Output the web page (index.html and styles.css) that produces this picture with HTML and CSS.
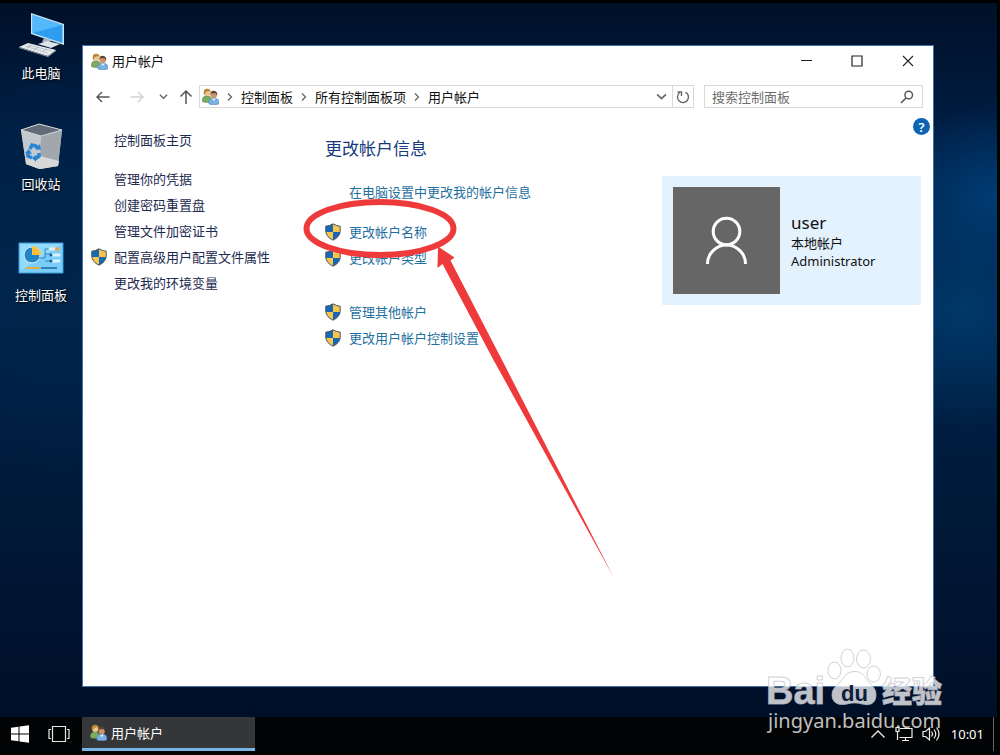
FILE: index.html
```html
<!DOCTYPE html>
<html lang="zh-CN">
<head>
    <meta charset="UTF-8">
    <meta name="viewport" content="width=device-width, initial-scale=1.0">
    <title>用户帐户</title>
    <link rel="stylesheet" href="styles.css">
</head>
<body>
    <!-- 公用图标 -->
    <svg class="symbols" aria-hidden="true">
        <symbol id="users" viewBox="0 0 16 16">
            <path d="M.5 13V10.500Q.7 8 3 7.500H6.500Q8.500 8 8.500 10.500V13Q4.500 14.300.5 13Z" fill="#7cab62" stroke="#59854a" stroke-width=".5"/>
            <circle cx="5" cy="4.500" r="3" fill="#ecc58d"/>
            <path d="M1.700 5.500Q1 1.300 4.200.7 7.800.2 8.200 3.500L6.800 3 4.500 3.200 3 4.800 2.800 7Z" fill="#b8893b"/>
            <path d="M6.500 15V12.500Q7 10 9.500 9.700H12.500Q15.500 10 15.800 12.500V15Q11 16.600 6.500 15Z" fill="#7bb1e3" stroke="#4c85bd" stroke-width=".5"/>
            <path d="m9.400 10 1.800 2.200L13 9.800Z" fill="#eef5fb"/>
            <circle cx="11" cy="6.500" r="3" fill="#cd936a"/>
            <path d="M8 6.500Q7.600 2.600 11 2.500 15 2.700 14.200 7.500L13 5 9 5Z" fill="#594333"/>
        </symbol>
        <symbol id="shield" viewBox="0 0 16 18">
            <path d="M8 .8Q4.500 3 .8 3.200V8.500Q1.300 14 8 17.200 14.700 14 15.200 8.500V3.200Q11.500 3 8 .8Z" fill="#f8c64d"/>
            <path d="M8 .8Q4.500 3 .8 3.200V9H8ZM8 9H15.200Q14.500 14 8 17.200Z" fill="#1769b5"/>
            <path d="M8 .8Q4.500 3 .8 3.200V8.500Q1.300 14 8 17.200 14.700 14 15.200 8.500V3.200Q11.500 3 8 .8Z" fill="none" stroke="#4b5560"/>
        </symbol>
        <symbol id="chevron" viewBox="0 0 10 10">
            <path d="m3 1.500 3.500 3.500L3 8.500" fill="none" stroke="#666" stroke-width="1.300"/>
        </symbol>
        <symbol id="chevron-down" viewBox="0 0 10 10">
            <path d="m1 3 4 4 4-4" fill="none" stroke="#666" stroke-width="1.500"/>
        </symbol>
    </svg>

    <div class="desktop">
        <nav class="desktop-icons" aria-label="桌面">
            <a class="shortcut" href="#">
                <svg width="48" height="48" viewBox="0 0 48 48">
                    <path d="m14 2 33 11v21L14 23Z" fill="#c9e4f5"/>
                    <path d="m15.500 4 30 10v18L15.500 22Z" fill="#2e9df0"/>
                    <path d="m15.500 4 30 10L15.500 22Z" fill="#55b8fa"/>
                    <path d="m27 27 7 2-1 3-8-1Z" fill="#a3b2bd"/>
                    <path d="m21 33 9-3 13 3-9 4Z" fill="#dde4e8"/>
                    <path d="m2 36 9-4 28 7-8 6Z" fill="#e7ebee"/>
                    <path d="m2 36 29 9 8-6v1l-8 6L2 37Z" fill="#8e9ba5"/>
                    <path d="m8 35 23 7M11 34l24 6M10 37l5-3M17 39l5-3M25 41l5-3" stroke="#a8b2ba" stroke-width=".7"/>
                </svg>
                <span>此电脑</span>
            </a>
            <a class="shortcut" href="#">
                <svg width="48" height="48" viewBox="0 0 48 48">
                    <path d="m4 8 18-6 23 6-4 36-19 3L9 42Z" fill="#aeb4ba"/>
                    <path d="m4 8 20 6-1 33L9 42Z" fill="#c4c9cd"/>
                    <path d="m24 14 21-6-4 36-18 3Z" fill="#a1a7ad"/>
                    <path d="m9 38 14-4 19 5-1 5-18 3L9 42Z" fill="#d5d7d8"/>
                    <path d="m4 8 18-6 23 6-21 6Z" fill="#626b76" stroke="#d4d8dc"/>
                    <path d="m13 27 2-4 4 1 2 3M22 31v3l-4 3M15 36l-4-2v-3" fill="none" stroke="#2786d4" stroke-width="3.500"/>
                    <path d="m18 27 6 1-1-6ZM19 33v7l-4-4ZM8 31l4-4 3 5Z" fill="#2786d4"/>
                </svg>
                <span>回收站</span>
            </a>
            <a class="shortcut" href="#">
                <svg width="48" height="48" viewBox="0 0 48 48">
                    <path d="M2 10h44v30H2Z" fill="#79cdf8" stroke="#3b9ddd"/>
                    <path d="M3 11h42L3 38Z" fill="#94dafb"/>
                    <circle cx="15" cy="22" r="8" fill="#2383c7" stroke="#d4edf9"/>
                    <path d="M15 22v-9a9 9 0 0 1 9 9Z" fill="#ffc13b"/>
                    <path d="M21 25h7v-9h4M28 21h6M28 28h6" fill="none" stroke="#2e87bc"/>
                    <path d="M33 16h7M35 22h7M35 28h7" stroke="#d9f2fc" stroke-width="3" stroke-linecap="round"/>
                    <path d="M9 35h14" stroke="#e2ae46" stroke-width="2"/>
                    <path d="M24 35h16" stroke="#2d81b8" stroke-width="2"/>
                    <circle cx="40" cy="16" r="2" fill="#f5a23a"/>
                    <circle cx="34" cy="22" r="1.500" fill="#165f9b"/>
                    <circle cx="34" cy="28" r="1.500" fill="#165f9b"/>
                </svg>
                <span>控制面板</span>
            </a>
        </nav>

        <div class="window">
            <header class="title-bar">
                <svg width="17" height="17"><use href="#users"/></svg>
                <h1>用户帐户</h1>
                <button type="button" aria-label="最小化">
                    <svg width="12" height="12" viewBox="0 0 12 12"><path d="M1 5.500h11" stroke="#222"/></svg>
                </button>
                <button type="button" aria-label="最大化">
                    <svg width="12" height="12" viewBox="0 0 12 12"><path d="M1 1h10v10H1Z" fill="none" stroke="#222" stroke-width="1.200"/></svg>
                </button>
                <button type="button" aria-label="关闭">
                    <svg width="12" height="12" viewBox="0 0 12 12"><path d="m1 1 10 10M11 1 1 11" stroke="#222" stroke-width="1.100"/></svg>
                </button>
            </header>

            <div class="nav-bar">
                <div class="nav-buttons">
                    <button type="button" aria-label="后退">
                        <svg width="14" height="14" viewBox="0 0 14 14"><path d="M13.500 7H1M6 2 1 7l5 5" fill="none" stroke="#555" stroke-width="1.400"/></svg>
                    </button>
                    <button type="button" aria-label="前进" disabled>
                        <svg width="14" height="14" viewBox="0 0 14 14"><path d="M.5 7H13M8 2l5 5-5 5" fill="none" stroke="#d2d2d2" stroke-width="1.400"/></svg>
                    </button>
                    <button type="button" aria-label="最近浏览的位置">
                        <svg width="9" height="9"><use href="#chevron-down"/></svg>
                    </button>
                    <button type="button" aria-label="上移">
                        <svg width="14" height="14" viewBox="0 0 14 14"><path d="M7 14V1M1.500 6.500 7 1l5.500 5.500" fill="none" stroke="#555" stroke-width="1.500"/></svg>
                    </button>
                </div>
                <div class="address">
                    <svg width="17" height="17"><use href="#users"/></svg>
                    <svg class="sep" width="10" height="10"><use href="#chevron"/></svg>
                    <a href="#">控制面板</a>
                    <svg class="sep" width="10" height="10"><use href="#chevron"/></svg>
                    <a href="#">所有控制面板项</a>
                    <svg class="sep" width="10" height="10"><use href="#chevron"/></svg>
                    <a href="#">用户帐户</a>
                    <button class="history" type="button" aria-label="历史记录">
                        <svg width="11" height="11"><use href="#chevron-down"/></svg>
                    </button>
                    <button class="refresh" type="button" aria-label="刷新">
                        <svg width="14" height="14" viewBox="0 0 14 14"><path d="M9.500 2.200A5.500 5.500 0 1 1 3.500 2.800M1.500 2h4v4" fill="none" stroke="#666" stroke-width="1.400"/></svg>
                    </button>
                </div>
                <form class="search">
                    <input type="text" placeholder="搜索控制面板" aria-label="搜索控制面板">
                    <button type="button" aria-label="搜索">
                        <svg width="14" height="14" viewBox="0 0 14 14"><circle cx="8.700" cy="5" r="3.800" fill="none" stroke="#555" stroke-width="1.400"/><path d="M6 8 1 13" stroke="#555" stroke-width="1.600"/></svg>
                    </button>
                </form>
            </div>

            <div class="content">
                <aside class="sidebar">
                    <a class="home" href="#">控制面板主页</a>
                    <a href="#">管理你的凭据</a>
                    <a href="#">创建密码重置盘</a>
                    <a href="#">管理文件加密证书</a>
                    <a class="admin" href="#"><svg width="16" height="18"><use href="#shield"/></svg>配置高级用户配置文件属性</a>
                    <a href="#">更改我的环境变量</a>
                </aside>

                <main class="account">
                    <h2>更改帐户信息</h2>
                    <div class="tasks">
                        <a class="plain" href="#">在电脑设置中更改我的帐户信息</a>
                    </div>
                    <div class="tasks">
                        <a href="#"><svg width="16" height="18"><use href="#shield"/></svg>更改帐户名称</a>
                        <a href="#"><svg width="16" height="18"><use href="#shield"/></svg>更改帐户类型</a>
                    </div>
                    <div class="tasks others">
                        <a href="#"><svg width="16" height="18"><use href="#shield"/></svg>管理其他帐户</a>
                        <a href="#"><svg width="16" height="18"><use href="#shield"/></svg>更改用户帐户控制设置</a>
                    </div>
                </main>

                <div class="profile">
                    <button class="help" type="button" aria-label="帮助">?</button>
                    <section class="card">
                        <svg class="avatar" width="107" height="107" viewBox="0 0 107 107">
                            <g fill="none" stroke="#fff" stroke-width="3">
                                <circle cx="53.500" cy="44.500" r="13.300"/>
                                <path d="M34.500 77a19 19 0 0 1 38 0"/>
                            </g>
                        </svg>
                        <div class="card-text">
                            <strong>user</strong>
                            <span>本地帐户</span>
                            <span>Administrator</span>
                        </div>
                    </section>
                </div>
            </div>

            <!-- 红圈和箭头 -->
            <svg class="marker" width="312" height="380" viewBox="303 198 312 380" aria-hidden="true">
                <ellipse cx="380" cy="228.500" rx="73.500" ry="26.500" fill="none" stroke="#ee3a3a" stroke-width="6"/>
                <path d="M438 246.500 454.500 257.500 450.500 260.500 502 360 613.500 577 493.500 360 442.500 264 437.500 268Z" fill="#ee3a3a"/>
            </svg>
        </div>
    </div>

    <footer class="taskbar">
        <button class="start" type="button" aria-label="开始">
            <svg width="18" height="18" viewBox="0 0 18 18"><path d="m0 2.800 7.500-1V8.500H0ZM8.500 1.600 18 .2v8.300H8.500ZM0 9.500h7.500v6.700L0 15.200ZM8.500 9.500H18v8.300l-9.500-1.400Z" fill="#fff"/></svg>
        </button>
        <button class="task-view" type="button" aria-label="任务视图">
            <svg width="22" height="18" viewBox="0 0 22 18"><path d="M4.500 1.500h13v15h-13ZM3 4.500H1v9h2M19 4.500h2v9h-2" fill="none" stroke="#e8e8e8" stroke-width="1.200"/></svg>
        </button>
        <button class="app" type="button">
            <svg width="17" height="17"><use href="#users"/></svg>
            用户帐户
        </button>
        <div class="tray">
            <svg width="16" height="10" viewBox="0 0 16 10"><path d="m1.500 8.500 6.500-6.500 6.500 6.500" fill="none" stroke="#eee" stroke-width="1.300"/></svg>
            <svg width="18" height="16" viewBox="0 0 18 16"><path d="M5 2.500h12v9H4.500M7 14.500h7M10.500 12v2M1 1.500h3v4H1ZM2.500 5.500V14" fill="none" stroke="#eee" stroke-width="1.200"/></svg>
            <svg width="18" height="16" viewBox="0 0 18 16"><path d="M1 5.500h2.500L7.500 2v12L3.500 10.500H1ZM9.500 5.500q2 2.500 0 5M12 3.500q3.500 4.500 0 9M14.500 1.500q5 6.500 0 13" fill="none" stroke="#eee" stroke-width="1.200"/></svg>
            <time>10:01</time>
        </div>
    </footer>

    <svg class="watermark" width="182" height="92" viewBox="765 645 182 92">
        <g class="mark">
            <text class="bai" x="766" y="704">Bai</text>
            <ellipse cx="834.500" cy="670.500" rx="6.500" ry="8.500"/>
            <ellipse cx="847.500" cy="658" rx="6.500" ry="9"/>
            <ellipse cx="863.500" cy="659" rx="7" ry="9"/>
            <ellipse cx="873.700" cy="674" rx="6.700" ry="8"/>
            <path d="M855 671.500C862 671.500 865 677 868 681 872 686 876 688 876 695 876 704 869 706 862 704 857 702.500 852 702.500 847 704 839 706 832 703 832 695 832 688 837 686 841 681 845 676 847 671.500 855 671.500Z"/>
            <text class="jingyan" x="882" y="702">经验</text>
            <text class="url" x="768" y="728">jingyan.baidu.com</text>
        </g>
        <text class="du" x="841" y="701">du</text>
    </svg>
</body>
</html>
```
FILE: styles.css
```css
* {
    box-sizing: border-box;
}
body {
    margin: 0;
    min-height: 100vh;
    display: flex;
    flex-direction: column;
    position: relative;
    background-color: #000;
    font-family: "Noto Sans", "Noto Sans CJK SC", sans-serif;
    font-size: 13px;
    line-height: 18px;
    color: #111;
}
a {
    color: inherit;
    text-decoration: none;
}
button, input {
    border: 0;
    padding: 0;
    background: none;
    font: inherit;
    color: inherit;
}
button {
    display: flex;
    align-items: center;
    justify-content: center;
}
svg {
    display: block;
    flex-shrink: 0;
}
.symbols {
    position: absolute;
    width: 0;
    height: 0;
}

/* 桌面 */
.desktop {
    flex: 1;
    display: flex;
    padding: 42px 63px 30px 0;
    border-top: 3px solid #000;
    border-right: 3px solid #000;
    background:
        radial-gradient(ellipse 130px 90px at 100% 27%, #003c74 0%, rgba(0, 60, 116, 0) 100%),
        radial-gradient(ellipse 130px 120px at 97% 43%, #003868 0%, rgba(0, 56, 104, 0) 100%),
        radial-gradient(ellipse 150px 230px at 6% 36%, #002449 0%, rgba(0, 36, 73, 0) 100%),
        linear-gradient(#001029 0%, #001d42 18%, #002650 40%, #001b3c 65%, #000f28 100%);
}
.desktop-icons {
    width: 82px;
    margin-top: -34px;
    display: flex;
    flex-direction: column;
    gap: 40px;
}
.shortcut {
    display: flex;
    flex-direction: column;
    align-items: center;
    gap: 5px;
    color: #fff;
    text-shadow: 1px 1px 2px #000;
}

/* 窗口 */
.window {
    flex: 1;
    position: relative;
    background-color: #fff;
    border: 1px solid #3d73a8;
}
.title-bar {
    display: flex;
    align-items: center;
    height: 30px;
    padding-left: 8px;
}
.title-bar h1 {
    flex: 1;
    margin: 0 0 0 4px;
    font-size: 13px;
    font-weight: 400;
}
.title-bar button {
    width: 51px;
    height: 30px;
}
.nav-bar {
    display: flex;
    height: 23px;
    margin: 9px 10px 0 13px;
}
.nav-buttons {
    display: flex;
    align-items: center;
    gap: 15px;
    width: 103px;
}
.nav-buttons button:nth-child(2) {
    margin-left: 5px;
}
.nav-buttons button:last-child {
    margin-left: -4px;
}
.address {
    flex: 1;
    display: flex;
    align-items: center;
    padding-left: 2px;
    border: 1px solid #d9d9d9;
}
.sep {
    margin: 0 6px;
}
.address .history {
    width: 22px;
    height: 21px;
    margin-left: auto;
}
.address .refresh {
    width: 21px;
    height: 21px;
    border-left: 1px solid #d9d9d9;
}
.search {
    display: flex;
    width: 219px;
    margin-left: 10px;
    border: 1px solid #d9d9d9;
}
.search input {
    flex: 1;
    min-width: 0;
    padding-left: 7px;
}
.search input::placeholder {
    color: #6d6d6d;
}
.search button {
    width: 30px;
}

.content {
    display: grid;
    grid-template-columns: 242px 1fr 271px;
}
.sidebar {
    display: flex;
    flex-direction: column;
    padding: 19px 0 0 31px;
    line-height: 26px;
    color: #1e2b50;
}
.sidebar .home {
    margin-bottom: 13px;
}
.sidebar .admin {
    display: flex;
    align-items: center;
    gap: 7px;
    margin-left: -23px;
}
.account {
    padding-top: 28px;
    line-height: 26px;
}
.account h2 {
    margin: 0 0 17px;
    font-size: 17px;
    font-weight: 400;
    color: #16397e;
}
.tasks {
    margin-bottom: 14px;
    color: #1f6f9f;
}
.tasks a {
    display: flex;
    align-items: center;
    gap: 8px;
}
.tasks .plain {
    padding-left: 24px;
}
.others {
    margin-top: 28px;
}
.profile {
    display: flex;
    flex-direction: column;
    padding-top: 10px;
}
.help {
    align-self: flex-end;
    width: 17px;
    height: 17px;
    margin-right: 3px;
    border-radius: 50%;
    background-color: #0f63b5;
    color: #fff;
    font-weight: 600;
}
.card {
    display: flex;
    align-items: center;
    gap: 11px;
    margin: 41px 12px 0 0;
    padding: 11px;
    background-color: #e3f2fd;
}
.avatar {
    background-color: #666;
}
.card-text {
    display: flex;
    flex-direction: column;
}
.card-text strong {
    font-size: 17px;
    font-weight: 400;
    line-height: 22px;
}
.marker {
    position: absolute;
    left: 220px;
    top: 152px;
    pointer-events: none;
}

/* 任务栏 */
.taskbar {
    display: flex;
    height: 38px;
    padding-bottom: 4px;
    background-color: #020305;
    color: #fff;
}
.start {
    width: 40px;
}
.task-view {
    width: 38px;
}
.app {
    width: 173px;
    margin-left: 4px;
    padding-left: 8px;
    justify-content: flex-start;
    gap: 4px;
    background-color: #343638;
    border-bottom: 3px solid #78b5e6;
}
.tray {
    display: flex;
    align-items: center;
    gap: 9px;
    margin: 0 6px 0 auto;
    padding-right: 9px;
    border-right: 1px solid #666;
}
.tray time {
    margin-left: 2px;
}

/* 水印 */
.watermark {
    position: absolute;
    right: 53px;
    bottom: 18px;
    pointer-events: none;
}
.mark {
    fill: rgba(255, 255, 255, .75);
    stroke: rgba(190, 190, 200, .7);
    stroke-width: 1px;
}
.bai {
    font: bold 38px "Liberation Sans", sans-serif;
}
.du {
    font: bold 22px "Liberation Sans", sans-serif;
    fill: #0c1c3c;
}
.jingyan {
    font: 900 30px "Noto Sans CJK SC", sans-serif;
}
.url {
    font: 20px "Noto Sans", sans-serif;
    stroke: none;
}
```
